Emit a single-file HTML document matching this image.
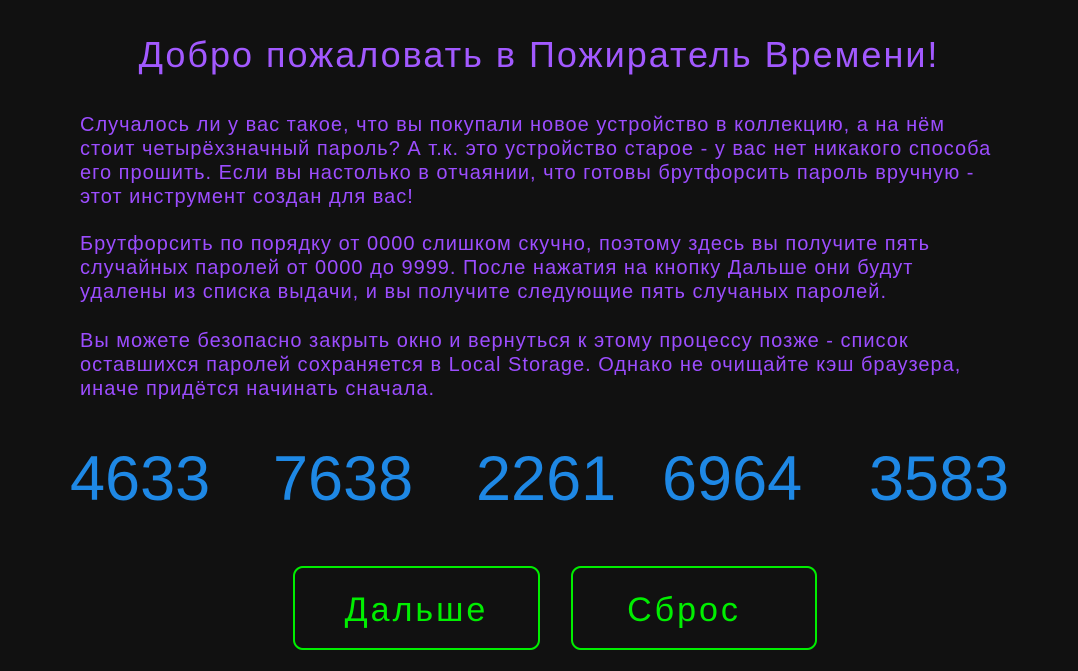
<!DOCTYPE html>
<html><head><meta charset="utf-8"><style>
html,body{margin:0;padding:0;background:#111111;width:1078px;height:671px;overflow:hidden;font-family:"Liberation Sans",sans-serif}
h1{position:absolute;left:0;width:1078px;top:30px;margin:0;text-align:center;color:#a259ff;font-weight:normal;font-size:36px;letter-spacing:2px;line-height:50px}
.p{position:absolute;left:80px;color:#9c4dff;font-size:20px;line-height:24px;letter-spacing:1px;white-space:nowrap}
.n{position:absolute;top:442px;color:#1e88e5;font-size:63px;line-height:74px;letter-spacing:0px}
.b{position:absolute;top:566px;height:80px;border:2px solid #00ee00;border-radius:10px;color:#00ee00;font-size:34px;line-height:84px;text-align:center;letter-spacing:3px}
</style></head><body>
<h1>Добро пожаловать в Пожиратель Времени!</h1>
<div class="p" style="top:113px">Случалось ли у вас такое, что вы покупали новое устройство в коллекцию, а на нём<br>стоит четырёхзначный пароль? А т.к. это устройство старое - у вас нет никакого способа<br>его прошить. Если вы настолько в отчаянии, что готовы брутфорсить пароль вручную -<br>этот инструмент создан для вас!</div>
<div class="p" style="top:232px">Брутфорсить по порядку от 0000 слишком скучно, поэтому здесь вы получите пять<br>случайных паролей от 0000 до 9999. После нажатия на кнопку Дальше они будут<br>удалены из списка выдачи, и вы получите следующие пять случаных паролей.</div>
<div class="p" style="top:329px">Вы можете безопасно закрыть окно и вернуться к этому процессу позже - список<br>оставшихся паролей сохраняется в Local Storage. Однако не очищайте кэш браузера,<br>иначе придётся начинать сначала.</div>
<div class="n" style="left:70px">4633</div>
<div class="n" style="left:273px">7638</div>
<div class="n" style="left:476px">2261</div>
<div class="n" style="left:662px">6964</div>
<div class="n" style="left:869px">3583</div>
<div class="b" style="left:293px;width:243px">Дальше</div>
<div class="b" style="left:571px;box-sizing:border-box;height:84px;line-height:84px;padding-right:20px;width:246px">Сброс</div>
</body></html>
